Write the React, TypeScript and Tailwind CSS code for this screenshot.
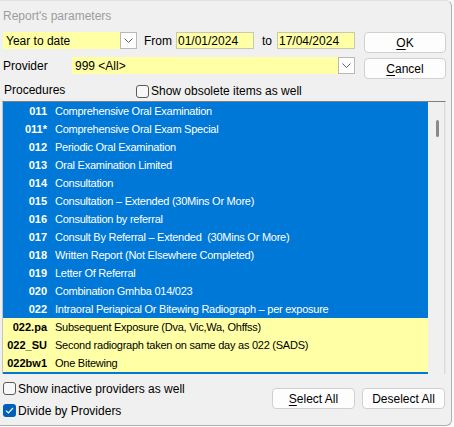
const FONT = { fontFamily: '"Liberation Sans", Arial, sans-serif' };

const ROWS: { code: string; text: string; sel: boolean }[] = [
  { code: "011", text: "Comprehensive Oral Examination", sel: true },
  { code: "011*", text: "Comprehensive Oral Exam Special", sel: true },
  { code: "012", text: "Periodic Oral Examination", sel: true },
  { code: "013", text: "Oral Examination Limited", sel: true },
  { code: "014", text: "Consultation", sel: true },
  { code: "015", text: "Consultation \u2013 Extended (30Mins Or More)", sel: true },
  { code: "016", text: "Consultation by referral", sel: true },
  { code: "017", text: "Consult By Referral \u2013 Extended  (30Mins Or More)", sel: true },
  { code: "018", text: "Written Report (Not Elsewhere Completed)", sel: true },
  { code: "019", text: "Letter Of Referral", sel: true },
  { code: "020", text: "Combination Gmhba 014/023", sel: true },
  { code: "022", text: "Intraoral Periapical Or Bitewing Radiograph \u2013 per exposure", sel: true },
  { code: "022.pa", text: "Subsequent Exposure (Dva, Vic,Wa, Ohffss)", sel: false },
  { code: "022_SU", text: "Second radiograph taken on same day as 022 (SADS)", sel: false },
  { code: "022bw1", text: "One Bitewing", sel: false },
];

function Chevron() {
  return (
    <svg width="9" height="5" viewBox="0 0 9 5" fill="none">
      <path d="M0.5 0.5 L4.5 4.5 L8.5 0.5" stroke="#606060" strokeWidth="1" />
    </svg>
  );
}

function DropButton() {
  return (
    <div className="w-[17px] h-full bg-white border border-[#b9b9b9] flex items-center justify-center">
      <Chevron />
    </div>
  );
}

function Checkbox({ checked, label }: { checked?: boolean; label: string }) {
  return (
    <div className="flex items-center h-[13px]">
      {checked ? (
        <div className="w-[13px] h-[13px] rounded-[3px] bg-[#005fb8] flex items-center justify-center">
          <svg width="9" height="7" viewBox="0 0 9 7" fill="none">
            <path d="M1 3.6 L3.4 6 L8 1" stroke="white" strokeWidth="1.2" />
          </svg>
        </div>
      ) : (
        <div className="w-[13px] h-[13px] rounded-[3px] border border-[#5a5a5a] bg-[#f7f7f7]" />
      )}
      <span className="ml-[2px] text-[12px] text-black leading-none">{label}</span>
    </div>
  );
}

function Button({ children, w }: { children: React.ReactNode; w: string }) {
  return (
    <div
      className={`${w} h-[21px] bg-[#fdfdfd] border border-[#d0d0d0] rounded-[4px] flex items-center justify-center text-[12px] text-black`}
    >
      {children}
    </div>
  );
}

export default function App() {
  return (
    <div className="w-[454px] h-[427px] bg-[#fafafa]" style={FONT}>
      <div className="w-[452px] h-[426px] bg-[#f0f0f0] border-r border-b border-t border-[#b0b0b0] border-t-[#e0e0e0] rounded-tr-[6px] rounded-br-[6px] flex flex-col">
        {/* title */}
        <div className="h-[30px] pl-[3px] flex items-center text-[12px] text-[#9c9c9c]">
          Report's parameters
        </div>

        {/* row 1 */}
        <div className="flex items-start pl-[3px] h-[21px] mt-[1px]">
          <div className="w-[134px] h-[17px] bg-[#ffffa6] flex items-center">
            <span className="flex-1 pl-[3px] text-[12px] text-black">Year to date</span>
            <DropButton />
          </div>
          <div className="w-[39px] h-[17px] pl-[7px] flex items-center text-[12px] text-black">From</div>
          <div className="w-[78px] h-[17px] bg-[#ffffa6] border border-[#c9c9b0] flex items-center pl-[1px] text-[12px] text-black">
            01/01/2024
          </div>
          <div className="w-[23px] h-[17px] pl-[8px] flex items-center text-[12px] text-black">to</div>
          <div className="w-[78px] h-[17px] bg-[#ffffa6] border border-[#c9c9b0] flex items-center pl-[1px] text-[12px] text-black">
            17/04/2024
          </div>
          <div className="ml-[9px]">
            <Button w="w-[82px]">
              <span>
                <u className="underline-offset-2">O</u>K
              </span>
            </Button>
          </div>
        </div>

        {/* row 2 */}
        <div className="flex items-start pl-[3px] mt-[4px] h-[23px]">
          <div className="w-[69px] h-[17px] flex items-center text-[12px] text-black">Provider</div>
          <div className="w-[283px] h-[17px] bg-[#ffffa6] flex items-center">
            <span className="flex-1 pl-[3px] text-[12px] text-black">999 &lt;All&gt;</span>
            <DropButton />
          </div>
          <div className="ml-[9px] mt-[1px]">
            <Button w="w-[82px]">
              <span>
                <u className="underline-offset-2">C</u>ancel
              </span>
            </Button>
          </div>
        </div>

        {/* row 3 */}
        <div className="flex items-center pl-[4px] h-[18px] mt-[2px]">
          <div className="w-[132px] text-[12px] text-black leading-none -mt-[2px]">Procedures</div>
          <Checkbox label="Show obsolete items as well" />
        </div>

        {/* list */}
        <div className="ml-[2px] mt-[1px] w-[444px] h-[273px] flex border-t border-l border-t-[#7f7f7f] border-l-[#c4c4c4] border-r border-r-[#e8e8e8]">
          <div className="flex-1 flex flex-col border-b-2 border-[#0078d7] overflow-hidden">
            {ROWS.map((r) => (
              <div
                key={r.code}
                className={`h-[18px] shrink-0 flex items-center ${
                  r.sel ? "bg-[#0078d7] text-white" : "bg-[#ffffa6] text-black"
                }`}
              >
                <span className="w-[44px] text-right font-bold text-[11px] leading-none">{r.code}</span>
                <span className="pl-[8px] text-[11px] tracking-[-0.25px] leading-none whitespace-pre">{r.text}</span>
              </div>
            ))}
          </div>
          <div className="w-[17px] bg-[#f0f0f0] border-r border-[#dcdcdc] relative">
            <div className="absolute left-[8px] top-[18px] w-[3px] h-[17px] rounded-full bg-[#8a8a8a]" />
          </div>
        </div>

        {/* bottom */}
        <div className="flex pl-[3px]">
          <div className="flex flex-col pt-[8px] gap-[9px]">
            <Checkbox label="Show inactive providers as well" />
            <Checkbox checked label="Divide by Providers" />
          </div>
          <div className="ml-auto mr-[6px] mt-[14px] flex gap-[7px]">
            <Button w="w-[83px]">
              <span>
                <u className="underline-offset-2">S</u>elect All
              </span>
            </Button>
            <Button w="w-[83px]">Deselect All</Button>
          </div>
        </div>
      </div>
    </div>
  );
}
